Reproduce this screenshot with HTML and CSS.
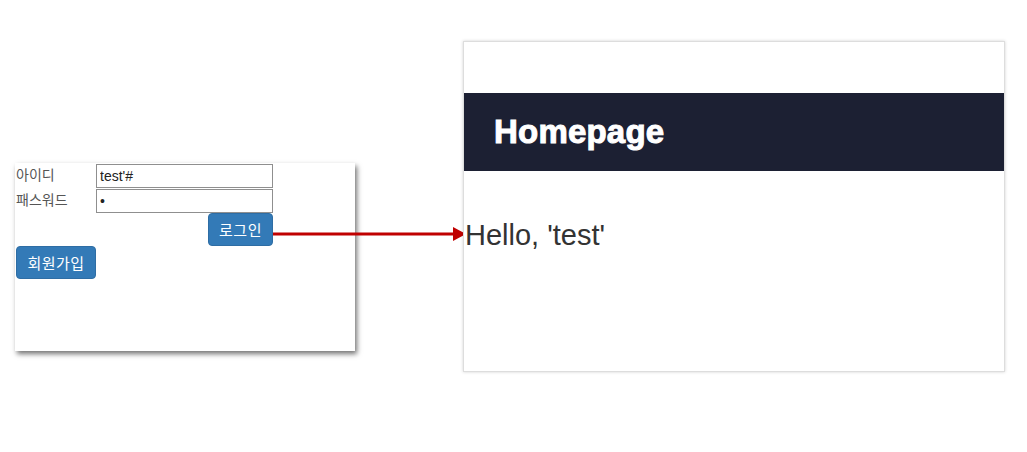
FILE: index.html
```html
<!DOCTYPE html>
<html lang="ko">
<head>
<meta charset="utf-8">
<link rel="stylesheet" href="styles.css">
<title>Login flow</title>
</head>
<body>
<div class="canvas">
  <section class="window login-window">
    <form class="login-form">
      <div class="row">
        <label class="label" for="uid">아이디</label>
        <input class="field" id="uid" type="text" value="test'#">
      </div>
      <div class="row">
        <label class="label" for="upw">패스워드</label>
        <input class="field" id="upw" type="password" value="1">
      </div>
      <div class="row row-end">
        <button type="button" class="btn btn-login">로그인</button>
      </div>
      <div class="row">
        <button type="button" class="btn btn-join">회원가입</button>
      </div>
    </form>
  </section>

  <svg class="arrow" width="194" height="16" viewBox="0 0 194 16">
    <rect x="0" y="6.5" width="182" height="3" fill="#c00000"/>
    <polygon points="180,1 193,8 180,15" fill="#c00000"/>
  </svg>

  <section class="window home-window">
    <header class="home-header">
      <h1 class="home-title">Homepage</h1>
    </header>
    <p class="greeting">Hello, 'test'</p>
  </section>
</div>
</body>
</html>
```

FILE: styles.css
```css
* { box-sizing: border-box; }

html, body {
  margin: 0;
  padding: 0;
  background: #ffffff;
}

body {
  font-family: "Liberation Sans", Arial, "Noto Sans CJK KR", sans-serif;
  color: #333333;
}

.canvas {
  position: relative;
  width: 1027px;
  height: 452px;
  overflow: hidden;
}

.window {
  position: absolute;
  background: #ffffff;
}

.login-window {
  left: 15px;
  top: 163px;
  width: 340px;
  height: 188px;
  box-shadow: 2px 3px 5px rgba(0, 0, 0, 0.55);
}

.login-form {
  display: flex;
  flex-direction: column;
  padding: 1px 0 0 1px;
}

.row {
  display: flex;
  align-items: center;
}

.row-end {
  width: 257px;
  justify-content: flex-end;
}

.label {
  width: 80px;
  font-family: "Noto Sans CJK KR", "Liberation Sans", sans-serif;
  font-size: 14px;
  line-height: 24px;
  color: #555555;
  align-self: flex-start;
  margin-top: -2px;
}

.field {
  width: 177px;
  height: 24px;
  margin: 0 0 1px 0;
  padding: 0 3px;
  border: 1px solid #8f8f8f;
  border-radius: 0;
  font-family: "Liberation Sans", Arial, sans-serif;
  font-size: 14px;
  color: #222222;
  background: #ffffff;
  outline: none;
}

.btn {
  height: 33px;
  border: 1px solid #2e6da4;
  border-radius: 4px;
  background: #337ab7;
  color: #ffffff;
  font-family: "Noto Sans CJK KR", "Liberation Sans", sans-serif;
  font-size: 15px;
  letter-spacing: 0.5px;
  line-height: 1;
  padding: 0;
  cursor: pointer;
}

.btn-login {
  width: 65px;
  margin-top: -1px;
}

.btn-join {
  width: 80px;
}

.arrow {
  position: absolute;
  left: 273px;
  top: 226px;
}

.home-window {
  left: 463px;
  top: 41px;
  width: 542px;
  height: 331px;
  border: 1px solid #dddddd;
  box-shadow: 0 0 3px rgba(0, 0, 0, 0.18);
  padding-top: 51px;
}

.home-header {
  height: 78px;
  background: #1c2033;
  display: flex;
  align-items: center;
  padding-left: 30px;
}

.home-title {
  margin: 0;
  font-family: "Liberation Sans", Arial, sans-serif;
  font-weight: bold;
  font-size: 33px;
  line-height: 38px;
  color: #ffffff;
  -webkit-text-stroke: 1px #ffffff;
  letter-spacing: 0.2px;
}

.greeting {
  margin: 48px 0 0 1px;
  font-family: "Liberation Sans", Arial, sans-serif;
  font-size: 29px;
  line-height: 33px;
  color: #333333;
}
```
